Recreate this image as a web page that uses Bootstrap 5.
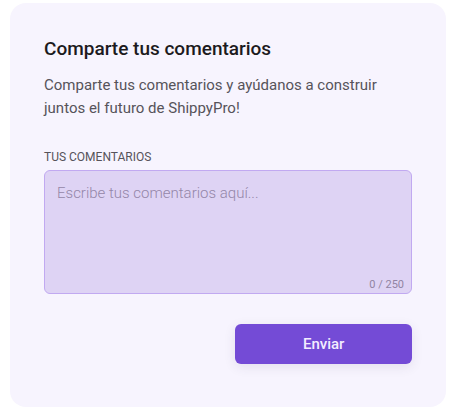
<!DOCTYPE html>
<html lang="es">
<head>
<meta charset="utf-8">
<meta name="viewport" content="width=device-width, initial-scale=1">
<title>Comparte tus comentarios</title>
<link href="https://cdn.jsdelivr.net/npm/bootstrap@5.3.0/dist/css/bootstrap.min.css" rel="stylesheet">
<style>
body { font-family: Roboto, sans-serif; font-size: 15px; color: #56535a; background: #fff; padding: 3px 4px 4px 10px; }
.feedback-panel { background: #f7f4fe; border-radius: 16px; padding: 34px; padding-bottom: 43px; }
.feedback-title { font-size: 19px; line-height: 24px; font-weight: 500; color: #1c1a20; margin-bottom: 13px; }
.feedback-intro { line-height: 23px; margin-bottom: 28px; }
.feedback-label { font-size: 12px; line-height: 18px; margin-bottom: 4px; }
.feedback-box { height: 124px; padding: 11px 12px; font-size: 15px; line-height: 22px; resize: none; color: #56535a; background: #ded3f4; border: 1px solid #c1a9f1; border-radius: 6px; }
.feedback-box:focus { background: #ded3f4; border-color: #744bd8; box-shadow: none; }
.feedback-box::placeholder { color: #9486a8; font-weight: 300; opacity: 1; }
.feedback-count { right: 8px; bottom: 2px; font-size: 11px; line-height: 14px; color: #9184a3; }
.feedback-send { width: 48%; height: 40px; font-size: 15px; font-weight: 500; color: #f3edff; border: 0; border-radius: 6px; background: #744bd6; box-shadow: 0 3px 12px rgba(60, 50, 90, .1); }
.feedback-send:hover { color: #fff; background: #643bc8; }
.feedback-actions { margin-top: 30px; }
</style>
</head>
<body>
<main class="feedback-panel">
  <h1 class="feedback-title">Comparte tus comentarios</h1>
  <p class="feedback-intro">Comparte tus comentarios y ayúdanos a construir juntos el futuro de ShippyPro!</p>
  <form>
    <label class="feedback-label d-block text-uppercase" for="comments">Tus comentarios</label>
    <div class="position-relative">
      <textarea class="form-control feedback-box" id="comments" maxlength="250" placeholder="Escribe tus comentarios aquí..."></textarea>
      <span class="feedback-count position-absolute">0 / 250</span>
    </div>
    <div class="feedback-actions d-flex justify-content-end">
      <button class="btn feedback-send" type="button">Enviar</button>
    </div>
  </form>
</main>
<script src="https://cdn.jsdelivr.net/npm/bootstrap@5.3.0/dist/js/bootstrap.bundle.min.js"></script>
</body>
</html>
